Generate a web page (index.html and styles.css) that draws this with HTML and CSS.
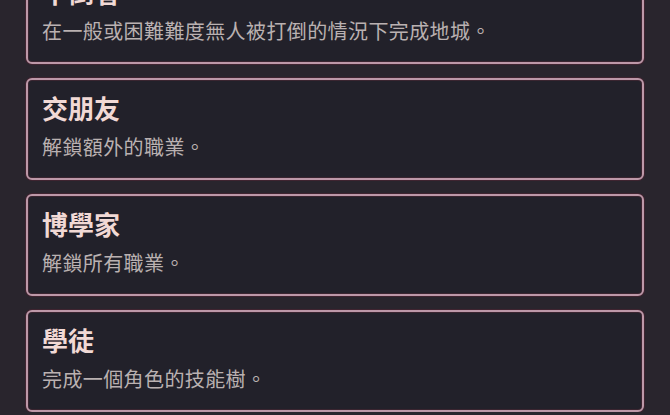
FILE: index.html
```html
<!DOCTYPE html>
<html lang="zh-Hant">
<head>
  <meta charset="UTF-8">
  <title>成就</title>
  <link rel="stylesheet" href="styles.css">
</head>
<body>
  <div class="achievements">
    <div class="achievement">
      <h3>不倒者</h3>
      <p>在一般或困難難度無人被打倒的情況下完成地城。</p>
    </div>
    <div class="achievement">
      <h3>交朋友</h3>
      <p>解鎖額外的職業。</p>
    </div>
    <div class="achievement">
      <h3>博學家</h3>
      <p>解鎖所有職業。</p>
    </div>
    <div class="achievement">
      <h3>學徒</h3>
      <p>完成一個角色的技能樹。</p>
    </div>
  </div>
</body>
</html>
```

FILE: styles.css
```css
body {
  margin: 0;
  background-color: #29252d;
  font-family: "Noto Sans CJK TC", "Noto Sans", sans-serif;
  overflow: hidden;
}
.achievements {
  display: flex;
  flex-direction: column;
  gap: 14px;
  padding: 0 26px;
  margin-top: -38px; /* list is scrolled past the first card */
}
.achievement {
  height: 102px;
  box-sizing: border-box;
  padding: 11px 14px 0;
  background-color: #22212a;
  border: 2px solid #bd98a8;
  border-radius: 6px;
  box-shadow: 0 0 0 1px #3f2430, inset 0 0 0 1px #3a2530;
}
.achievement h3 {
  margin: 0;
  font-size: 26px;
  line-height: 34px;
  font-weight: bold;
  color: #f1d9d5;
}
.achievement p {
  margin: 8px 0 0;
  font-size: 20px;
  line-height: 28px;
  letter-spacing: 0.4px;
  color: #bab1b1;
}
```
